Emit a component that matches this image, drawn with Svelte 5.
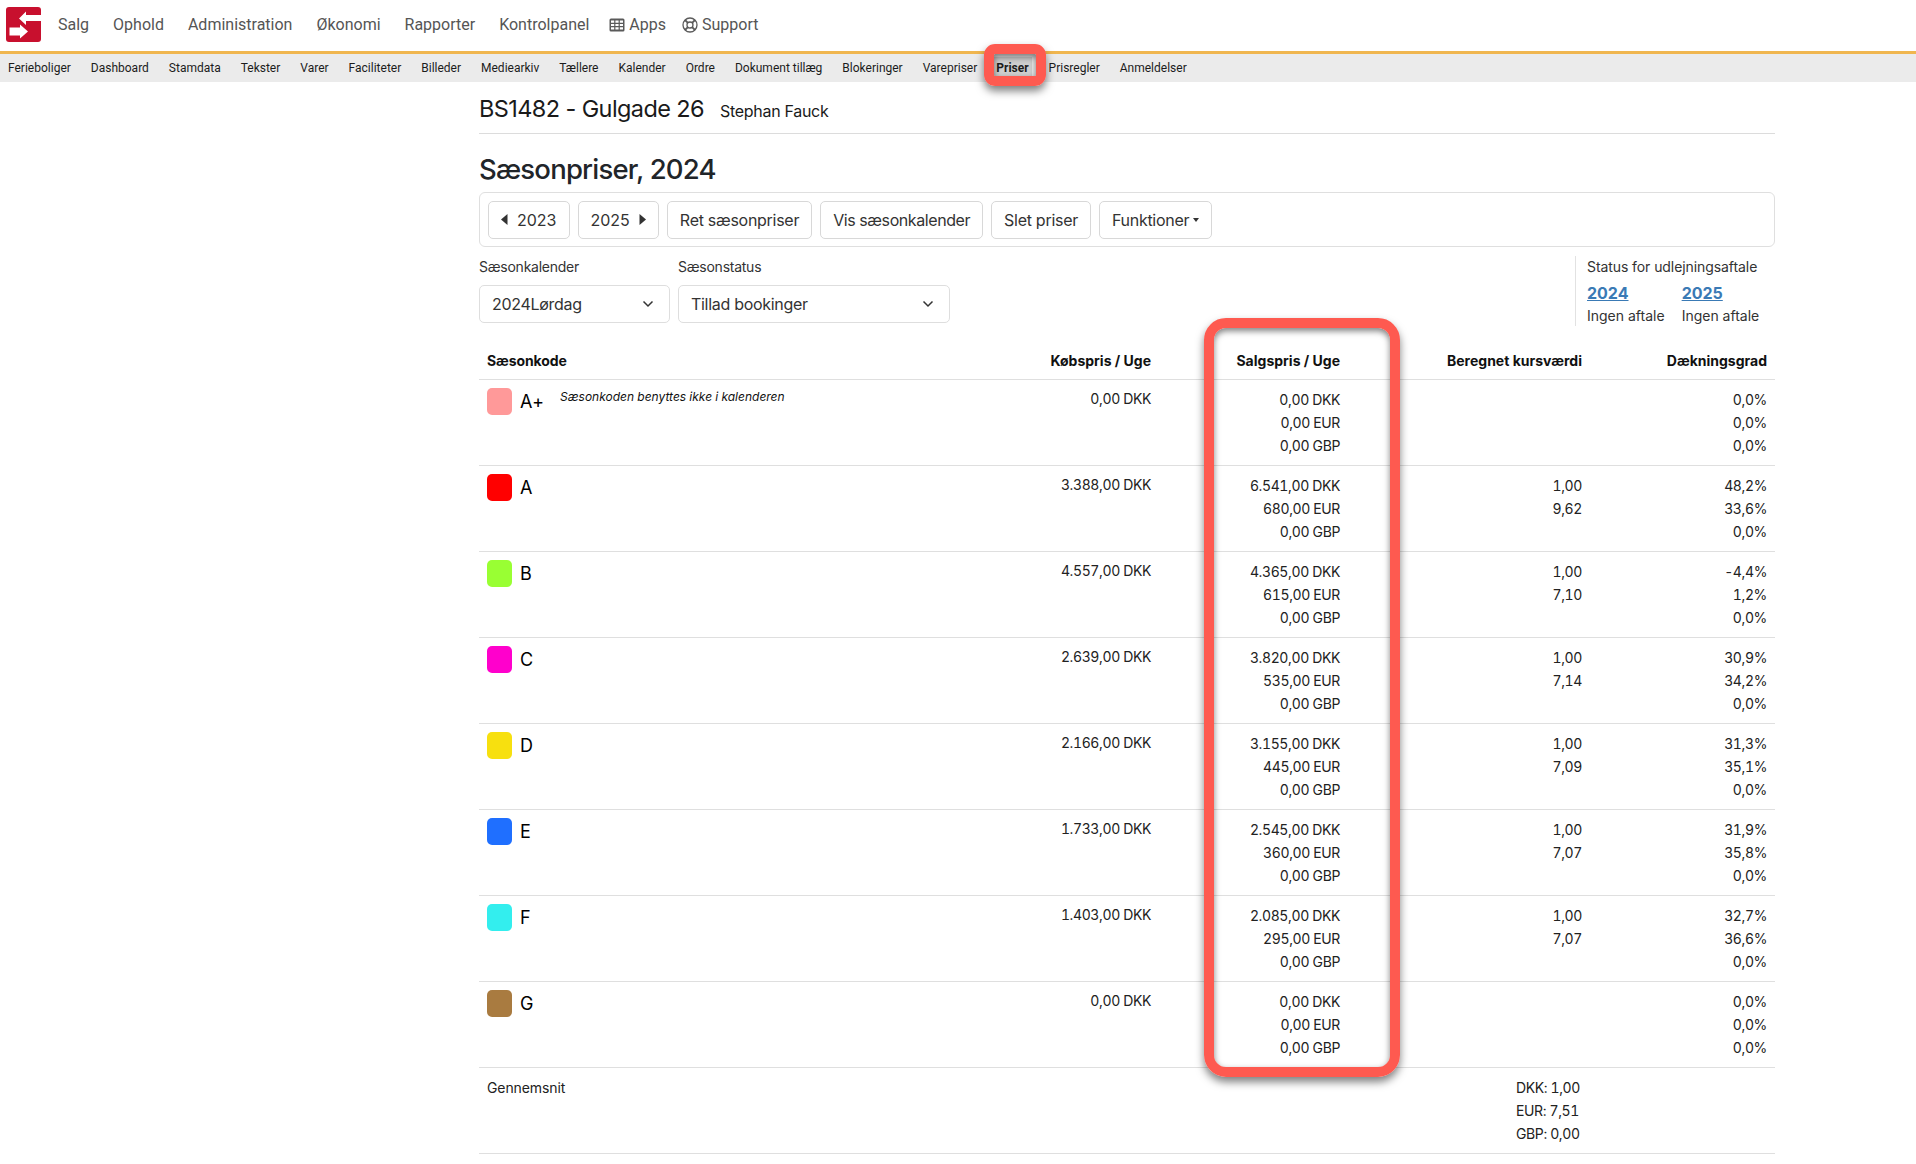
<script lang="ts">
  const mainNav = ["Salg", "Ophold", "Administration", "Økonomi", "Rapporter", "Kontrolpanel"];
  const subNav = ["Ferieboliger", "Dashboard", "Stamdata", "Tekster", "Varer", "Faciliteter", "Billeder", "Mediearkiv", "Tællere", "Kalender", "Ordre", "Dokument tillæg", "Blokeringer", "Varepriser", "Priser", "Prisregler", "Anmeldelser"];

  const seasons = [
    { code: "A+", color: "#ff9999", note: "Sæsonkoden benyttes ikke i kalenderen", buy: "0,00 DKK", sell: ["0,00 DKK", "0,00 EUR", "0,00 GBP"], rate: [], margin: ["0,0%", "0,0%", "0,0%"] },
    { code: "A", color: "#ff0000", buy: "3.388,00 DKK", sell: ["6.541,00 DKK", "680,00 EUR", "0,00 GBP"], rate: ["1,00", "9,62"], margin: ["48,2%", "33,6%", "0,0%"] },
    { code: "B", color: "#99ff33", buy: "4.557,00 DKK", sell: ["4.365,00 DKK", "615,00 EUR", "0,00 GBP"], rate: ["1,00", "7,10"], margin: ["-4,4%", "1,2%", "0,0%"] },
    { code: "C", color: "#ff00cc", buy: "2.639,00 DKK", sell: ["3.820,00 DKK", "535,00 EUR", "0,00 GBP"], rate: ["1,00", "7,14"], margin: ["30,9%", "34,2%", "0,0%"] },
    { code: "D", color: "#f7e00f", buy: "2.166,00 DKK", sell: ["3.155,00 DKK", "445,00 EUR", "0,00 GBP"], rate: ["1,00", "7,09"], margin: ["31,3%", "35,1%", "0,0%"] },
    { code: "E", color: "#1f6fff", buy: "1.733,00 DKK", sell: ["2.545,00 DKK", "360,00 EUR", "0,00 GBP"], rate: ["1,00", "7,07"], margin: ["31,9%", "35,8%", "0,0%"] },
    { code: "F", color: "#33eeee", buy: "1.403,00 DKK", sell: ["2.085,00 DKK", "295,00 EUR", "0,00 GBP"], rate: ["1,00", "7,07"], margin: ["32,7%", "36,6%", "0,0%"] },
    { code: "G", color: "#a97b40", buy: "0,00 DKK", sell: ["0,00 DKK", "0,00 EUR", "0,00 GBP"], rate: [], margin: ["0,0%", "0,0%", "0,0%"] }
  ];
</script>

<header class="topbar">
  <svg class="logo" width="35" height="35" viewBox="0 0 35 35" aria-label="Logo">
    <rect width="35" height="35" rx="3" fill="#c8102e" />
    <path d="M13 11.5 20 4.5V8H35V14H20V18Z" fill="#fff" />
    <path d="M3.5 20.5H14V17.5L22 24.5 14 31.5V28.5H3.5Z" fill="#fff" />
  </svg>
  <nav class="main-nav">
    {#each mainNav as item}
      <span>{item}</span>
    {/each}
    <span class="with-icon apps">
      <svg width="16" height="14" viewBox="0 0 16 14">
        <rect x="0.5" y="0.5" width="15" height="13" rx="1.5" fill="#5a5a5a" />
        <path d="M2 2.5h3.2v2.2H2zM6.4 2.5h3.2v2.2H6.4zM10.8 2.5H14v2.2h-3.2zM2 5.9h3.2v2.2H2zM6.4 5.9h3.2v2.2H6.4zM10.8 5.9H14v2.2h-3.2zM2 9.3h3.2v2.2H2zM6.4 9.3h3.2v2.2H6.4zM10.8 9.3H14v2.2h-3.2z" fill="#fff" />
      </svg>
      Apps
    </span>
    <span class="with-icon support">
      <svg width="16" height="16" viewBox="0 0 16 16" fill="none" stroke="#5a5a5a" stroke-width="1.3">
        <circle cx="8" cy="8" r="7" />
        <circle cx="8" cy="8" r="3" />
        <path d="M3 3l2.9 2.9M13 3l-2.9 2.9M3 13l2.9-2.9M13 13l-2.9-2.9" stroke-width="1.8" />
      </svg>
      Support
    </span>
  </nav>
</header>

<div class="subnav">
  {#each subNav as item}
    <span class="sub-item" class:active={item === "Priser"}>{item}</span>
  {/each}
</div>

<main class="page">
  <div class="title-row">
    <h2>BS1482 - Gulgade 26</h2>
    <span class="owner">Stephan Fauck</span>
  </div>

  <h1>Sæsonpriser, 2024</h1>

  <div class="toolbar">
    <button>
      <svg width="7" height="11" viewBox="0 0 7 11"><path d="M6.5 0v11L0 5.5Z" fill="#333" /></svg>
      <span class="year year-left">2023</span>
    </button>
    <button>
      <span class="year year-right">2025</span>
      <svg width="7" height="11" viewBox="0 0 7 11"><path d="M.5 0v11L7 5.5Z" fill="#333" /></svg>
    </button>
    <button>Ret sæsonpriser</button>
    <button class="tight">Vis sæsonkalender</button>
    <button>Slet priser</button>
    <button class="caret">Funktioner</button>
  </div>

  <div class="filters">
    <div class="field cal">
      <span class="field-label">Sæsonkalender</span>
      <div class="select">
        2024Lørdag
        <svg width="12" height="8" viewBox="0 0 12 8" fill="none" stroke="#333" stroke-width="1.5"><path d="M1.5 1.5 6 6l4.5-4.5" /></svg>
      </div>
    </div>
    <div class="field stat">
      <span class="field-label">Sæsonstatus</span>
      <div class="select">
        Tillad bookinger
        <svg width="12" height="8" viewBox="0 0 12 8" fill="none" stroke="#333" stroke-width="1.5"><path d="M1.5 1.5 6 6l4.5-4.5" /></svg>
      </div>
    </div>
    <div class="agreement">
      <div class="agreement-title">Status for udlejningsaftale</div>
      <div class="agreement-cols">
        <div>
          <span class="year-link">2024</span>
          <span class="agreement-state">Ingen aftale</span>
        </div>
        <div>
          <span class="year-link">2025</span>
          <span class="agreement-state">Ingen aftale</span>
        </div>
      </div>
    </div>
  </div>

  <table>
    <colgroup>
      <col style="width:490px" />
      <col style="width:190px" />
      <col style="width:189px" />
      <col style="width:242px" />
      <col style="width:185px" />
    </colgroup>
    <thead>
      <tr>
        <th class="left">Sæsonkode</th>
        <th>Købspris / Uge</th>
        <th>Salgspris / Uge</th>
        <th>Beregnet kursværdi</th>
        <th>Dækningsgrad</th>
      </tr>
    </thead>
    <tbody>
      {#each seasons as s}
        <tr>
          <td class="left">
            <div class="code">
              <span class="swatch" style="background:{s.color}"></span>
              <span class="code-name">{s.code}</span>
              {#if s.note}<em class="note">{s.note}</em>{/if}
            </div>
          </td>
          <td><div class="buy">{s.buy}</div></td>
          <td>{#each s.sell as v}<div>{v}</div>{/each}</td>
          <td>{#each s.rate as v}<div>{v}</div>{/each}</td>
          <td>{#each s.margin as v}<div>{v}</div>{/each}</td>
        </tr>
      {/each}
      <tr>
        <td class="left">Gennemsnit</td>
        <td></td>
        <td></td>
        <td class="avg-cell">
          <div class="avg">
            <div>DKK: 1,00</div>
            <div>EUR: 7,51</div>
            <div>GBP: 0,00</div>
          </div>
        </td>
        <td></td>
      </tr>
    </tbody>
  </table>
</main>

<div class="mark mark-priser"></div>
<div class="mark mark-column"></div>

<style>
  :global(body) {
    margin: 0;
    background: #fff;
    color: #212529;
    font-family: Inter, "Liberation Sans", sans-serif;
    font-size: 14px;
  }

  .topbar {
    height: 51px;
    display: flex;
    align-items: center;
    background: #fff;
    border-bottom: 3px solid #f0b64f;
    font-family: Roboto, sans-serif;
  }
  .logo { margin-left: 6px; flex-shrink: 0; position: relative; top: -1px; }
  .main-nav {
    display: flex;
    align-items: center;
    margin-left: 17px;
    gap: 24px;
    font-size: 16px;
    color: #555;
    position: relative;
    top: -1px;
  }
  .with-icon { display: inline-flex; align-items: center; gap: 4px; }
  .apps { margin-left: -4px; margin-right: -8px; }

  .subnav {
    height: 28px;
    display: flex;
    align-items: center;
    gap: 20px;
    padding-left: 8px;
    background: #ebebeb;
    font-family: Roboto, sans-serif;
    font-size: 12px;
    color: #1c1c1c;
  }
  .sub-item.active {
    font-weight: 700;
    background: #cfcfcf;
    margin: 0 -3px 0 -4px;
    padding: 4px 3px;
  }

  .page {
    width: 1296px;
    margin-left: 479px;
  }
  .title-row {
    display: flex;
    align-items: baseline;
    gap: 16px;
    height: 52px;
    padding-top: 12px;
    box-sizing: border-box;
    border-bottom: 1px solid #dcdcdc;
  }
  h2 { margin: 0; font-size: 23.5px; font-weight: 400; color: #1a1a1a; line-height: 30px; letter-spacing: -0.6px; }
  .owner { font-size: 16px; color: #1a1a1a; letter-spacing: -0.3px; }
  h1 {
    margin: 13px 0 0;
    font-size: 27.5px;
    font-weight: 500;
    line-height: 45px;
    color: #212529;
    letter-spacing: -0.8px;
  }

  .toolbar {
    margin-top: 0;
    height: 55px;
    box-sizing: border-box;
    display: flex;
    align-items: center;
    gap: 8px;
    padding-left: 8px;
    border: 1px solid #dfdfdf;
    border-radius: 6px;
  }
  button {
    height: 38px;
    display: inline-flex;
    align-items: center;
    padding: 0 12px;
    background: #fff;
    border: 1px solid #d8d8d8;
    border-radius: 5px;
    font: inherit;
    font-size: 16px;
    letter-spacing: -0.28px;
    color: #333;
  }
  button.tight { letter-spacing: -0.42px; }
  .year { letter-spacing: 0; }
  .year-left { margin-left: 9px; }
  .year-right { margin-right: 9px; }
  .caret::after {
    content: "";
    margin-left: 4px;
    border-top: 4px solid #333;
    border-left: 3.5px solid transparent;
    border-right: 3.5px solid transparent;
  }

  .filters {
    display: flex;
    height: 70px;
    margin-top: 9px;
    gap: 8px;
  }
  .field { display: flex; flex-direction: column; }
  .cal { width: 191px; }
  .stat { width: 272px; }
  .field-label { line-height: 22px; margin-bottom: 7px; color: #333; letter-spacing: -0.25px; }
  .select {
    height: 38px;
    box-sizing: border-box;
    display: flex;
    align-items: center;
    justify-content: space-between;
    padding: 0 15px 0 12px;
    border: 1px solid #dedede;
    border-radius: 5px;
    font-size: 16px;
    letter-spacing: -0.3px;
    color: #333;
  }
  .agreement {
    margin-left: auto;
    width: 200px;
    box-sizing: border-box;
    padding-left: 11px;
    border-left: 1px solid #e2e2e2;
    color: #333;
  }
  .agreement-title { line-height: 22px; letter-spacing: -0.08px; }
  .agreement-cols { display: flex; gap: 17px; margin-top: 4px; }
  .agreement-cols > div { display: flex; flex-direction: column; }
  .year-link {
    font-size: 16px;
    font-weight: 700;
    line-height: 22px;
    color: #3a7ab5;
    text-decoration: underline;
    width: 76px;
  }
  .agreement-state { line-height: 22px; margin-top: 1px; }

  table {
    width: 1296px;
    margin-top: 0;
    border-collapse: collapse;
    table-layout: fixed;
    line-height: 23px;
    color: #222;
  }
  th {
    height: 53px;
    padding: 23px 8px 7px;
    box-sizing: border-box;
    text-align: right;
    font-weight: 700;
    color: #111;
    border-bottom: 1px solid #dfdfdf;
    letter-spacing: 0;
  }
  td {
    height: 86px;
    box-sizing: border-box;
    padding: 8px;
    text-align: right;
    vertical-align: top;
    border-bottom: 1px solid #dfdfdf;
    font-variant-numeric: tabular-nums;
    letter-spacing: -0.38px;
  }
  .left { text-align: left; }
  th.left { text-align: left; letter-spacing: -0.1px; }
  td.left { color: #222; letter-spacing: -0.1px; }
  .buy { margin-top: -1px; }
  .code { display: flex; align-items: flex-start; }
  .swatch {
    width: 25px;
    height: 27px;
    border-radius: 5px;
    flex-shrink: 0;
    margin-top: 0;
  }
  .code-name {
    margin-left: 8px;
    font-size: 18px;
    line-height: 28px;
    color: #000;
    min-width: 40px;
  }
  .note {
    font-size: 12px;
    line-height: 18px;
    color: #111;
    letter-spacing: 0;
  }
  .avg-cell { position: relative; }
  .avg { position: absolute; left: 168px; top: 8px; text-align: left; white-space: nowrap; }

  /* red annotation rectangles drawn over the screenshot */
  .mark {
    position: absolute;
    box-sizing: border-box;
    border: 10px solid #fe5a50;
    box-shadow: 0 5px 8px rgba(0, 0, 0, 0.5), inset 0 3px 6px rgba(0, 0, 0, 0.5);
  }
  .mark-priser {
    left: 984px;
    top: 44px;
    width: 62px;
    height: 42px;
    border-radius: 11px;
  }
  .mark-column {
    left: 1204px;
    top: 318px;
    width: 196px;
    height: 759px;
    border-radius: 22px;
  }
</style>
